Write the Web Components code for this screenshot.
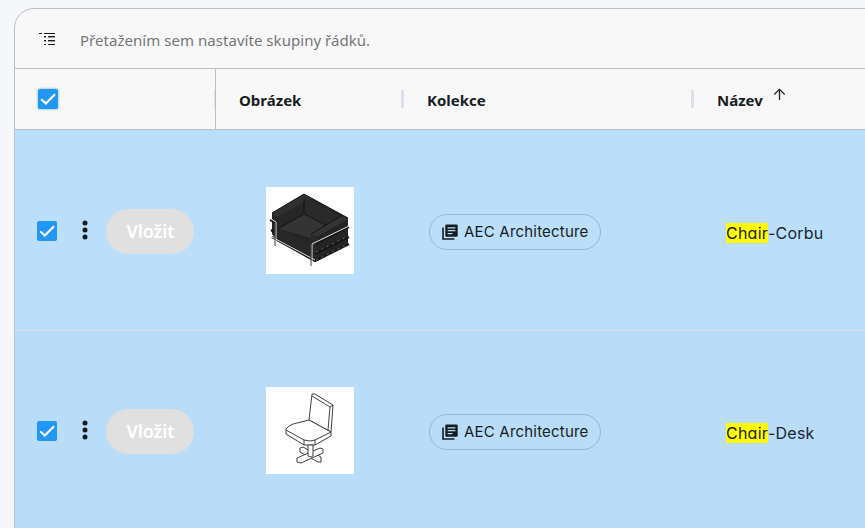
<!DOCTYPE html>
<html lang="cs"><head><meta charset="utf-8"><title>Rodiny</title>
<style>html,body{margin:0;height:528px;overflow:hidden;background:#f5f7fa}</style></head><body>
<family-grid></family-grid>
<script>
const define=(name,css,html)=>customElements.define(name,class extends HTMLElement{
  constructor(){super();this.attachShadow({mode:'open'}).innerHTML=`<style>*{box-sizing:border-box}${css}</style>${typeof html==='function'?html(this):html}`;}
});
define('check-box',':host{display:block;width:20px;height:20px;border-radius:2px;background:#2196f3;flex:none}:host([focused]){box-shadow:0 0 2px 1px #acd7fb}svg{display:block}',
 '<svg width="20" height="20"><path d="M3.2 10.2 7.8 14.5 17 5.2" fill="none" stroke="#fff" stroke-width="2.2"/></svg>');
define('group-icon',':host{display:block;width:17px;height:14px}svg{display:block}',
 '<svg width="17" height="14" shape-rendering="crispEdges"><g fill="#181d1f"><path d="M0 1h3v1H0zM5 1h11v1H5zM5 4h2v1H5zM9 4h7v1H9zM5 12h2v1H5zM9 12h7v1H9z"/><path d="M5 8h2v1H5zM9 8h7v1H9z"/></g><path d="M5 5h2v1H5zM9 5h7v1H9zM5 9h2v1H5zM9 9h7v1H9z" fill="#999ba5"/></svg>');
define('group-bar',':host{display:flex;align-items:center;height:60px;padding-left:24px;border-bottom:1px solid #babfc7;font:15px "Noto Sans",sans-serif;color:#747778}span{margin-left:24px;padding-top:3px;line-height:20px;white-space:nowrap;font-weight:400;letter-spacing:.04px}',
 '<group-icon></group-icon><span><slot></slot></span>');
define('header-cell',':host{display:flex;align-items:center;height:100%;padding-left:23px;font:700 15px/20px "Noto Sans",sans-serif;color:#181d1f}.t{padding-top:1px}i{width:3px;height:18px;background:#dde0ea;margin-left:auto}:host([last]) i{display:none}svg{margin:-9px 0 0 10px}svg{display:none}:host([last]) svg{display:block}',
 '<span class="t"><slot></slot></span><svg width="14" height="14"><path d="M6.5 1.3V12M1.3 6.5 6.5 1.3l5.2 5.2" fill="none" stroke="#20282b" stroke-width="1.3"/></svg><i></i>');
define('header-row',':host{display:grid;grid-template-columns:201px 188px 290px 1fr;height:61px;border-bottom:1px solid #babfc7}.p{display:flex;align-items:center;padding-left:22.5px;border-right:1px solid #babfc7}.p i{width:1px;height:18px;background:#dde0ea;margin-left:auto}',
 '<div class="p"><check-box focused></check-box><i></i></div><header-cell>Obrázek</header-cell><header-cell>Kolekce</header-cell><header-cell last>Název</header-cell>');
define('more-button',':host{display:block;width:6px;height:20px}svg{display:block}',
 '<svg width="6" height="20"><g fill="#151c20"><circle cx="3" cy="3" r="2.5"/><circle cx="3" cy="10" r="2.5"/><circle cx="3" cy="17" r="2.5"/></g></svg>');
define('insert-button',':host{display:flex;align-items:center;justify-content:center;width:88px;height:45px;border-radius:23px;background:#e0e0e0;color:#fff;font:600 18px/24px "Noto Sans",sans-serif}span{letter-spacing:-.1px;padding-left:1px}','<span><slot></slot></span>');
define('collection-chip',':host{display:flex;align-items:center;width:172px;height:36px;border:1px solid #9bb4c7;border-radius:18px;padding-left:12px;font:15px/20px Inter,sans-serif;color:#151c20;white-space:nowrap}svg{margin-right:6px;flex:none}span{letter-spacing:.2px}',
 '<svg width="16" height="16"><path d="M1 3.5V15h11.5" fill="none" stroke="#151c20" stroke-width="1.6"/><rect x="3.3" y=".5" width="12.4" height="12.3" rx="1.2" fill="#151c20"/><path d="M5.6 3.8h7.8M5.6 6.7h7.8M5.6 9.6h4.8" stroke="#bbdefb" stroke-width="1.3"/></svg><span><slot></slot></span>');
define('family-thumbnail',':host{display:block;width:88px;height:87px;background:#fff}svg{display:block}',e=>
 e.getAttribute('kind')==='armchair'?`<svg width="88" height="87" viewBox="0 0 88 87">
<path d="M6 26 38 7 82 31v27L51 74 13 55 6 47z" fill="#242424"/>
<path d="M6 26 38 7 45 12 12 30z" fill="#303030"/><path d="M12 30 38 16v11L12 42z" fill="#262626"/>
<path d="M38 10 76 30 60 39 38 27z" fill="#2a2a2a"/><path d="M38 27 60 38 45 47v4L13 42z" fill="#343434"/><path d="M13 42 45 57v14L13 54z" fill="#282828"/>
<path d="M45 47 75 29l7 3-31 18z" fill="#343434"/><path d="M45 47 51 50v22l-6-3z" fill="#292929"/>
<path d="M6 26 38 7 82 31M38 12v15L60 38M38 27 13 41M45 47 75 29" fill="none" stroke="#101010" stroke-width=".9"/>
<g fill="none" stroke="#171717" stroke-width="2.2"><path d="M4 33 11 36M5 43 8 45M49 57 83 40M49 67 83 50M49 74 83 57M6 50 49 74"/></g>
<g fill="none" stroke="#e4e4e4" stroke-width="1"><path d="M5 32 10 35v23M46 78V57L83 39M6 50 49 73"/></g>
<path d="M50 65 82 49M50 73 82 57" stroke="#888" stroke-width=".7" stroke-dasharray="2 4"/>
<path d="M9 36v23M45 57v22" stroke="#444"/></svg>`
 :`<svg width="88" height="87" viewBox="0 0 88 87"><g fill="#fff" stroke="#2a2a2a" stroke-width=".9" stroke-linejoin="round"><path d="M46 7 49 7 67 18 65 45 43 33z"/><path d="M46 9 64 20 62 43M64 20l3-2"/><path d="M20 42Q22 39 27 37L43 33 65 45v4L49 58H38L20 47z"/><path d="M20 43 38 53Q44 55 49 53L65 45M38 53v5M49 53v5"/><path d="M34 61 37 60 55 70V75L52 75 34 65z"/><path d="M54 61 57 62V66L35 76 31 75V71z"/><path d="M42 58v11q3 2 5 0V58z"/></g></svg>`);
define('family-name',':host{display:block;font:16px/20px Inter,sans-serif;color:#17262f;white-space:nowrap;font-feature-settings:"cv11";letter-spacing:.23px}mark{background:#ff0;color:#151c20;padding:0;display:inline-block;height:20px}',
 e=>`<mark>${e.getAttribute('hit')}</mark><slot></slot>`);
define('family-row',':host{display:grid;grid-template-columns:201px 188px 290px 1fr;height:200px;background:#bbdefb;align-items:center}:host([odd]){background:#b9dcf9;box-shadow:inset 0 1px #d9dfe8}.a{display:flex;align-items:center;padding-left:21.5px;padding-top:2px}more-button{margin:-2px 0 0 25.5px}insert-button{margin-left:18px}family-thumbnail{margin-left:50px}collection-chip{margin:4px 0 0 25px}family-name{margin:6px 0 0 32px}',
 e=>`<div class="a"><check-box></check-box><more-button></more-button><insert-button>Vložit</insert-button></div><div><family-thumbnail kind="${e.getAttribute('kind')}"></family-thumbnail></div><div><collection-chip>AEC Architecture</collection-chip></div><div><family-name hit="Chair"><slot></slot></family-name></div>`);
define('family-grid',':host{display:block;padding:8px 0 0 14px;height:528px;overflow:hidden}.w{width:871px;height:560px;border:1px solid #babfc7;border-radius:20px;background:#f8f8f8;overflow:hidden}',
 '<div class="w"><group-bar>Přetažením sem nastavíte skupiny řádků.</group-bar><header-row></header-row><family-row kind="armchair">-Corbu</family-row><family-row kind="desk" odd>-Desk</family-row></div>');
</script></body></html>
